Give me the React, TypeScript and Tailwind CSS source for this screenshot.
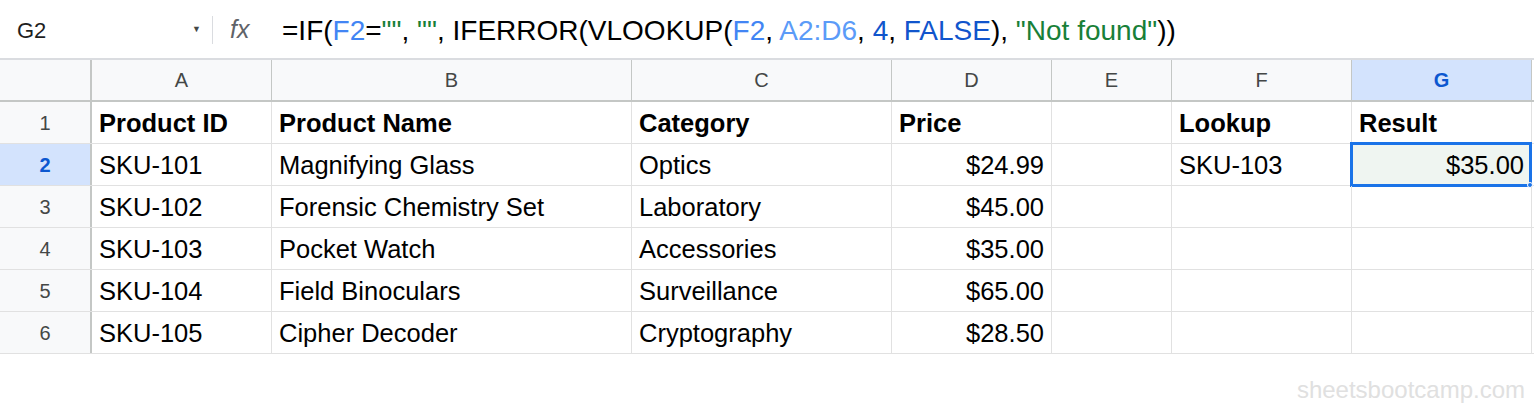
import React from "react";

const cols = [
  { key: "A", w: "w-[180px]" },
  { key: "B", w: "w-[360px]" },
  { key: "C", w: "w-[260px]" },
  { key: "D", w: "w-[160px]" },
  { key: "E", w: "w-[120px]" },
  { key: "F", w: "w-[180px]" },
  { key: "G", w: "w-[180px]" },
];

type Cell = { text?: string; bold?: boolean; right?: boolean };

const rows: Cell[][] = [
  [
    { text: "Product ID", bold: true },
    { text: "Product Name", bold: true },
    { text: "Category", bold: true },
    { text: "Price", bold: true },
    {},
    { text: "Lookup", bold: true },
    { text: "Result", bold: true },
  ],
  [
    { text: "SKU-101" },
    { text: "Magnifying Glass" },
    { text: "Optics" },
    { text: "$24.99", right: true },
    {},
    { text: "SKU-103" },
    { text: "$35.00", right: true },
  ],
  [
    { text: "SKU-102" },
    { text: "Forensic Chemistry Set" },
    { text: "Laboratory" },
    { text: "$45.00", right: true },
    {},
    {},
    {},
  ],
  [
    { text: "SKU-103" },
    { text: "Pocket Watch" },
    { text: "Accessories" },
    { text: "$35.00", right: true },
    {},
    {},
    {},
  ],
  [
    { text: "SKU-104" },
    { text: "Field Binoculars" },
    { text: "Surveillance" },
    { text: "$65.00", right: true },
    {},
    {},
    {},
  ],
  [
    { text: "SKU-105" },
    { text: "Cipher Decoder" },
    { text: "Cryptography" },
    { text: "$28.50", right: true },
    {},
    {},
    {},
  ],
];

function FormulaBar() {
  return (
    <div className="flex h-[60px] items-center border-b-2 border-[#dadce0] bg-white pt-[2px]">
      <div className="flex w-[212px] items-center justify-between pl-[17px] pr-[11px] text-[22px] text-[#1f1f1f]">
        <span>G2</span>
        <span className="text-[9px] text-[#444746]">▼</span>
      </div>
      <div className="h-[28px] w-px bg-[#dadce0]" />
      <span className="ml-[17px] w-[52px] text-[25px] italic text-[#5f6368]">fx</span>
      <div className="pt-[2px] text-[28px] text-[#000]">
        =IF(<span className="text-[#4285f4]">F2</span>=
        <span className="text-[#188038]">""</span>,{" "}
        <span className="text-[#188038]">""</span>, IFERROR(VLOOKUP(
        <span className="text-[#4285f4]">F2</span>,{" "}
        <span className="text-[#5b9bf8]">A2:D6</span>,{" "}
        <span className="text-[#1155cc]">4</span>,{" "}
        <span className="text-[#1155cc]">FALSE</span>),{" "}
        <span className="text-[#188038]">"Not found"</span>))
      </div>
    </div>
  );
}

export default function App() {
  return (
    <div
      className="relative h-[414px] w-[1534px] overflow-hidden bg-white"
      style={{ fontFamily: '"Liberation Sans", Arial, sans-serif' }}
    >
      <FormulaBar />

      {/* column headers */}
      <div className="flex h-[42px] border-b-2 border-[#c4c7c5]">
        <div className="w-[92px] border-r-2 border-[#c4c7c5] bg-[#f8f9fa]" />
        {cols.map((c) => (
          <div
            key={c.key}
            className={`${c.w} flex items-center justify-center border-r border-[#c4c7c5] text-[20px] ${
              c.key === "G"
                ? "bg-[#d3e3fd] font-bold text-[#0b57d0]"
                : "bg-[#f8f9fa] text-[#444746]"
            }`}
          >
            {c.key}
          </div>
        ))}
      </div>

      {/* rows */}
      {rows.map((r, i) => (
        <div key={i} className="flex h-[42px] border-b border-[#e1e1e1]">
          <div
            className={`flex w-[92px] items-center justify-center border-r-2 border-[#c4c7c5] text-[20px] ${
              i === 1
                ? "bg-[#d3e3fd] font-bold text-[#0b57d0]"
                : "bg-[#f8f9fa] text-[#444746]"
            }`}
          >
            {i + 1}
          </div>
          {r.map((cell, j) => {
            const selected = i === 1 && j === 6;
            return (
              <div
                key={j}
                className={`${cols[j].w} relative flex items-center border-r border-[#e1e1e1] px-[7px] pt-[2px] text-[25.5px] text-black ${
                  cell.right ? "justify-end" : "justify-start"
                } ${cell.bold ? "font-bold" : ""} ${selected ? "bg-[#eff5f1]" : ""}`}
              >
                {cell.text}
                {selected && (
                  <div className="absolute -left-[2px] -top-[2px] -right-[1px] -bottom-[2px] border-[3px] border-[#1a73e8]">
                    <div className="absolute -right-[4px] -bottom-[4px] h-[6px] w-[6px] rounded-sm border border-white bg-[#1a73e8]" />
                  </div>
                )}
              </div>
            );
          })}
        </div>
      ))}

      <div className="flex justify-end pr-[9px] pt-[18px] text-[24px] text-[#e0e0e0]">
        sheetsbootcamp.com
      </div>
    </div>
  );
}
